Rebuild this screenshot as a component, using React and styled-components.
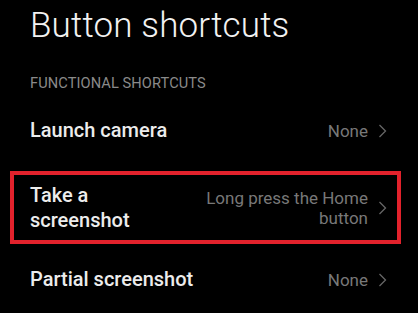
import React from 'react';
import styled, { createGlobalStyle, css } from 'styled-components';

const GlobalStyle = createGlobalStyle`
  html, body {
    margin: 0;
    padding: 0;
    background: #000;
  }
  body {
    font-family: Roboto, "Noto Sans", "Liberation Sans", sans-serif;
    -webkit-font-smoothing: antialiased;
  }
`;

const Page = styled.div`
  width: 418px;
  height: 313px;
  overflow: hidden;
  background: #000;
  padding: 5px 31px 0 30px;
  box-sizing: border-box;
`;

const Title = styled.h1`
  margin: 0;
  font-size: 35px;
  font-weight: 300;
  line-height: 41px;
  color: #f2f2f2;
  letter-spacing: 0.15px;
`;

const SectionHeader = styled.div`
  margin-top: 29px;
  font-size: 14.6px;
  line-height: 16px;
  color: #8a8a8a;
  letter-spacing: 0.1px;
`;

const List = styled.div`
  display: flex;
  flex-direction: column;
  margin-top: 6px;
`;

const Row = styled.div`
  display: flex;
  align-items: center;
  gap: 12px;
  min-height: 67px;
  box-sizing: border-box;

  ${(p) =>
    p.highlighted &&
    css`
      min-height: 73px;
      margin: 7px -14px 2px -20px;
      padding: 0 10px 0 16px;
      border: 4px solid #e2222c;
    `}
`;

const Label = styled.div`
  flex: 1;
  font-size: 20px;
  font-weight: 500;
  line-height: 25px;
  color: #ececec;
  max-width: ${(p) => (p.narrow ? '120px' : 'none')};
`;

const Value = styled.div`
  margin-left: auto;
  max-width: 170px;
  text-align: right;
  font-size: 17px;
  line-height: 20px;
  color: #787878;
`;

const Chevron = styled.svg`
  flex: none;
  width: 9px;
  height: 14px;
  margin-left: -2px;
`;

function Arrow() {
  return (
    <Chevron viewBox="0 0 9 14">
      <polyline points="1.5,1 7.5,7 1.5,13" fill="none" stroke="#666" strokeWidth="1.3" />
    </Chevron>
  );
}

function ShortcutRow({ label, value, highlighted, narrow }) {
  return (
    <Row highlighted={highlighted}>
      <Label narrow={narrow}>{label}</Label>
      <Value>{value}</Value>
      <Arrow />
    </Row>
  );
}

export default function App() {
  return (
    <>
      <GlobalStyle />
      <Page>
        <Title>Button shortcuts</Title>
        <SectionHeader>FUNCTIONAL SHORTCUTS</SectionHeader>
        <List>
          <ShortcutRow label="Launch camera" value="None" />
          <ShortcutRow
            label="Take a screenshot"
            value="Long press the Home button"
            highlighted
            narrow
          />
          <ShortcutRow label="Partial screenshot" value="None" />
        </List>
      </Page>
    </>
  );
}
